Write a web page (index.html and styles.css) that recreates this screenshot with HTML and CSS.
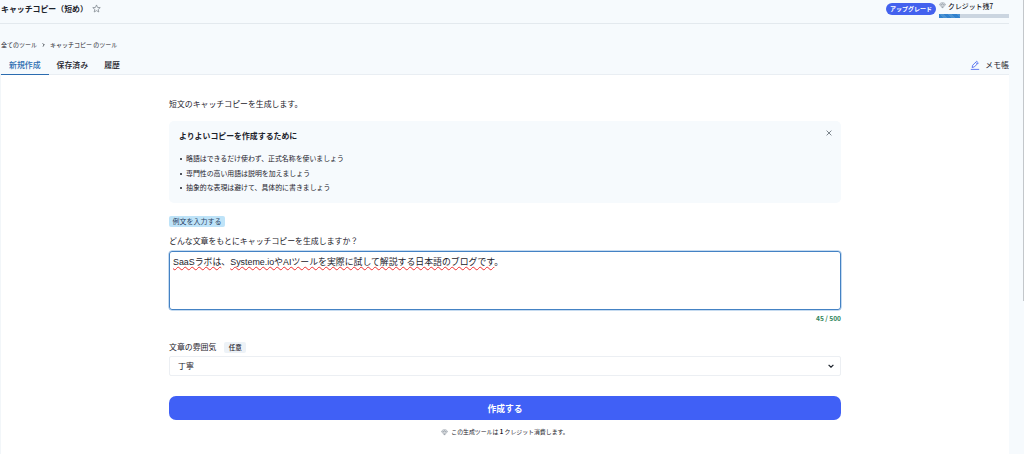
FILE: index.html
```html
<!DOCTYPE html>
<html lang="ja">
<head>
    <meta charset="UTF-8">
    <meta name="viewport" content="width=device-width, initial-scale=1.0">
    <title>キャッチコピー（短め）</title>
    <link rel="stylesheet" href="styles.css">
</head>
<body>
    <div class="page">
        <header class="header">
            <h1>キャッチコピー（短め）</h1>
            <svg class="star" viewBox="0 0 24 24"><path d="M12 2.5l2.8 6.6 7.2.6-5.500 4.700 1.700 7L12 17.700 5.800 21.400l1.700-7L2 9.700l7.200-.6z"/></svg>
            <div class="account">
                <button class="upgrade">アップグレード</button>
                <div class="credit">
                    <div class="credit-label">
                        <svg class="gem" viewBox="0 0 24 24"><path d="M6 3h12l4 6-10 12L2 9zM2 9h20M8.500 9L12 20l3.500-11L12 3z"/></svg>
                        <span>クレジット残7</span>
                    </div>
                    <div class="bar"><div class="bar-fill"></div></div>
                </div>
            </div>
        </header>

        <nav class="breadcrumb">
            <a>全てのツール</a>
            <svg class="sep" viewBox="0 0 6 10"><path d="M1 1l4 4-4 4"/></svg>
            <a>キャッチコピー のツール</a>
        </nav>

        <div class="tabs">
            <a class="tab active">新規作成</a>
            <a class="tab">保存済み</a>
            <a class="tab">履歴</a>
            <a class="memo">
                <svg viewBox="0 0 24 24"><path d="M5 18l1.500-5.500L16 3l4 4-9.500 9.500zM13.500 5.500l4 4M2 22.500h20"/></svg>
                <span>メモ帳</span>
            </a>
        </div>

        <main class="content">
            <form class="form">
                <p class="intro">短文のキャッチコピーを生成します。</p>

                <section class="tips">
                    <div class="tips-head">
                        <h2>よりよいコピーを作成するために</h2>
                        <svg class="close" viewBox="0 0 10 10"><path d="M1 1l8 8M9 1L1 9"/></svg>
                    </div>
                    <ul>
                        <li>略語はできるだけ使わず、正式名称を使いましょう</li>
                        <li>専門性の高い用語は説明を加えましょう</li>
                        <li>抽象的な表現は避けて、具体的に書きましょう</li>
                    </ul>
                </section>

                <span class="example">例文を入力する</span>
                <label class="question">どんな文章をもとにキャッチコピーを生成しますか？</label>
                <div class="textarea" role="textbox"><span class="spell">SaaSラボは</span>、<span class="spell">Systeme.ioやAIツールを実際に試して解説する日本語のブログです</span>。</div>
                <div class="count">45 / 500</div>

                <div class="tone">
                    <label>文章の雰囲気</label>
                    <span class="optional">任意</span>
                </div>
                <div class="select">
                    <span>丁寧</span>
                    <svg viewBox="0 0 10 6"><path d="M1 1l4 4 4-4"/></svg>
                </div>

                <button class="submit" type="button">作成する</button>
                <div class="note">
                    <svg class="gem" viewBox="0 0 24 24"><path d="M6 3h12l4 6-10 12L2 9zM2 9h20M8.500 9L12 20l3.500-11L12 3z"/></svg>
                    <span>この生成ツールは <b>1</b> クレジット消費します。</span>
                </div>
            </form>
        </main>
    </div>
    <div class="scroll"></div>
</body>
</html>
```

FILE: styles.css
```css
* {
    box-sizing: border-box;
}

body {
    margin: 0;
    height: 454px;
    display: flex;
    justify-content: space-between;
    overflow: hidden;
    background: #f6fafd;
    color: #1c222b;
    font-family: "Noto Sans CJK JP", sans-serif;
    font-size: 7.9px;
    line-height: 12px;
}

h1, h2, p, ul {
    margin: 0;
    padding: 0;
    font-size: 7.9px;
}

svg {
    display: block;
    fill: none;
    stroke: currentColor;
    stroke-width: 2;
}

button {
    border: 0;
    padding: 0;
    color: #fff;
    font-family: inherit;
    font-weight: bold;
}

.page {
    width: 1009px;
    display: flex;
    flex-direction: column;
}

.header {
    height: 24px;
    flex: none;
    display: flex;
    align-items: flex-start;
    padding: 3px 0 0 1px;
    border-bottom: 1px solid #e3e9ee;
}

.header h1 {
    font-weight: bold;
    width: 91px;
}

.star {
    width: 9px;
    height: 9px;
    margin-top: 1px;
    color: #7d858e;
}

.account {
    margin: -3px 0 0 auto;
    display: flex;
    gap: 3px;
}

.upgrade {
    width: 50px;
    height: 12px;
    margin-top: 3px;
    border-radius: 6px;
    background: #4361ee;
    font-size: 6px;
    line-height: 12px;
}

.credit {
    width: 70px;
}

.credit-label {
    display: flex;
    align-items: center;
    gap: 2px;
    height: 11px;
    font-size: 6.9px;
    font-weight: 500;
    white-space: nowrap;
}

.gem {
    width: 7px;
    height: 7px;
    color: #8b949e;
}

.bar {
    height: 4px;
    margin-top: 3px;
    background: #cbd5e0;
}

.bar-fill {
    width: 21px;
    height: 4px;
    background: repeating-linear-gradient(45deg, #3182ce 0 3px, #4a92d2 3px 6px);
}

.breadcrumb {
    display: flex;
    align-items: center;
    height: 12px;
    margin-top: 15px;
    padding-left: 1px;
    font-size: 6px;
}

.sep {
    width: 3px;
    height: 4px;
    margin: 0 5px;
}

.tabs {
    display: flex;
    height: 18px;
    flex: none;
    margin-top: 6px;
    padding-left: 1px;
    border-bottom: 1px solid #e9eef3;
    font-weight: 500;
}

.tab {
    height: 19px;
    padding: 2px 8px 0;
}

.tab.active {
    height: 18px;
    color: #2b6cb0;
    border-bottom: 1px solid #2b6cb0;
}

.memo {
    display: flex;
    gap: 5px;
    margin-left: auto;
    padding-top: 2px;
    font-weight: 400;
}

.memo svg {
    width: 10px;
    height: 10px;
    margin-top: 1px;
    color: #4361ee;
}

.content {
    flex: 1;
    background: #fff;
    border-left: 1px solid #f2f6f9;
}

.form {
    width: 672px;
    margin-left: 168px;
    padding-top: 23px;
}

.tips {
    height: 82px;
    margin-top: 11px;
    padding: 9px 9px 0 10px;
    border-radius: 5px;
    background: #f6fafd;
}

.tips-head {
    display: flex;
    justify-content: space-between;
}

.tips h2 {
    font-weight: bold;
}

.close {
    width: 6px;
    height: 6px;
    color: #6f7780;
    stroke-width: 1.5;
}

.tips ul {
    margin-top: 9px;
    padding-left: 7px;
    list-style: none;
}

.tips li {
    height: 14.500px;
    font-size: 6.9px;
    line-height: 14.500px;
}

.tips li::before {
    content: "";
    float: left;
    width: 2px;
    height: 2px;
    margin: 7px 0 0 -6px;
    border-radius: 1px;
    background: #1c222b;
}

.example {
    display: block;
    width: 56px;
    height: 11px;
    margin-top: 13px;
    border-radius: 2px;
    background: #bee3f8;
    color: #2a4365;
    font-size: 7px;
    line-height: 11px;
    text-align: center;
}

.question {
    display: block;
    margin-top: 8px;
}

.textarea {
    height: 59px;
    margin-top: 4px;
    padding: 4px 3px;
    border: 1px solid #4482c4;
    border-radius: 3px;
    box-shadow: 0 0 0 0.5px #8db8e2;
    font-family: "Liberation Sans", "Noto Sans CJK JP", sans-serif;
    font-size: 8.9px;
    line-height: 13px;
}

.spell {
    text-decoration-line: underline;
    text-decoration-style: wavy;
    text-decoration-color: #f03030;
    text-decoration-thickness: 0.8px;
    text-decoration-skip-ink: none;
    text-underline-offset: 1px;
}

.count {
    margin-top: 2px;
    color: #2f855a;
    font-size: 6.6px;
    font-weight: bold;
    text-align: right;
}

.tone {
    display: flex;
    align-items: center;
    gap: 8px;
    margin-top: 17px;
}

.optional {
    width: 22px;
    height: 11px;
    border-radius: 2px;
    background: #edf2f7;
    font-size: 6.5px;
    font-weight: 500;
    line-height: 11px;
    text-align: center;
}

.select {
    display: flex;
    justify-content: space-between;
    align-items: center;
    height: 20px;
    margin-top: 3px;
    padding: 0 6px 0 8px;
    border: 1px solid #eceff3;
    border-radius: 2px;
}

.select svg {
    width: 6px;
    height: 4px;
}

.submit {
    display: block;
    width: 100%;
    height: 24px;
    margin-top: 20px;
    border-radius: 7px;
    background: #4060f6;
    font-size: 8.8px;
}

.note {
    display: flex;
    justify-content: center;
    align-items: center;
    gap: 3px;
    margin-top: 6px;
    font-size: 5.9px;
}

.scroll {
    width: 1px;
    height: 301px;
    background: #c3c7cb;
}
```
